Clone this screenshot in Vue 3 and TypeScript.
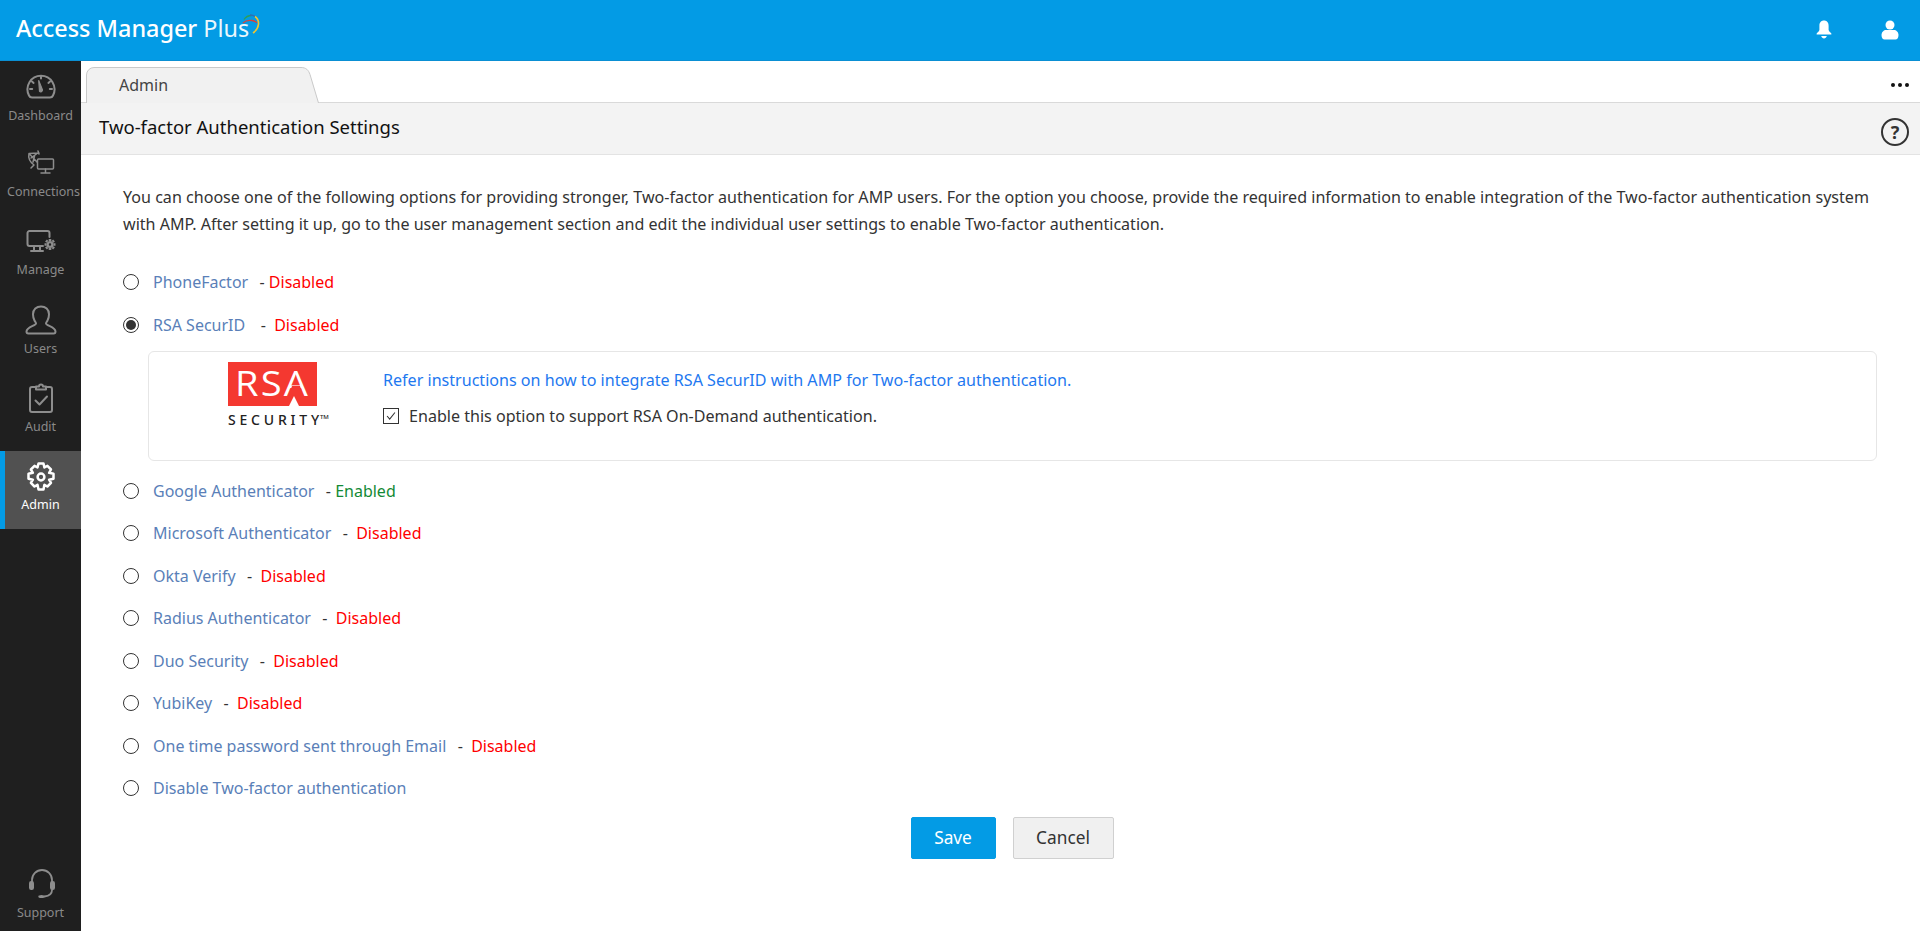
<script setup lang="ts">
interface NavItem { label: string; icon: string; active?: boolean }
interface Opt { name: string; sep: string; status: string; enabled?: boolean; checked?: boolean; panel?: boolean }

const nav: NavItem[] = [
  { label: 'Dashboard', icon: 'dash' },
  { label: 'Connections', icon: 'conn' },
  { label: 'Manage', icon: 'manage' },
  { label: 'Users', icon: 'users' },
  { label: 'Audit', icon: 'audit' },
  { label: 'Admin', icon: 'admin', active: true },
]

const options: Opt[] = [
  { name: 'PhoneFactor', sep: '  - ', status: 'Disabled' },
  { name: 'RSA SecurID', sep: '   -  ', status: 'Disabled', checked: true, panel: true },
  { name: 'Google Authenticator', sep: '  - ', status: 'Enabled', enabled: true },
  { name: 'Microsoft Authenticator', sep: '  -  ', status: 'Disabled' },
  { name: 'Okta Verify', sep: '  -  ', status: 'Disabled' },
  { name: 'Radius Authenticator', sep: '  -  ', status: 'Disabled' },
  { name: 'Duo Security', sep: '  -  ', status: 'Disabled' },
  { name: 'YubiKey', sep: '  -  ', status: 'Disabled' },
  { name: 'One time password sent through Email', sep: '  -  ', status: 'Disabled' },
  { name: 'Disable Two-factor authentication', sep: '', status: '' },
]
</script>

<template>
  <div class="app">
    <header class="topbar">
      <div class="brand">
        <span class="brand-strong">Access Manager</span>&nbsp;<span class="brand-light">Plus</span>
        <svg class="swoosh" width="20" height="20" viewBox="0 0 20 20" fill="none" stroke-width="1.300">
          <path d="M1 9 C3 7 6 6 10 6.500 C12 6.800 14 7.500 15 9" stroke="#d8433a" />
          <path d="M2 5.500 C4 2.500 7 1.500 9.500 1.500" stroke="#2f9e57" />
          <path d="M8 1 C11 1 15 3 17 7" stroke="#2d6fb8" />
          <path d="M13 2.500 C18 6 18 14 11 19" stroke="#f0c42f" stroke-width="1.600" />
        </svg>
      </div>
      <div class="top-actions">
        <svg width="16" height="20" viewBox="0 0 16 20" fill="#fff">
          <path d="M8 0.500c3 0 4.600 2.200 4.600 5.200v4.100c0 1.300 1.800 2.500 2.700 3.600.4.500.1 1.100-.5 1.100H1.200c-.6 0-.9-.6-.5-1.100.9-1.100 2.700-2.300 2.700-3.600V5.700C3.400 2.700 5 .5 8 .5z" />
          <path d="M5.200 16h5.600c-.4 1.500-1.500 2.500-2.800 2.500S5.600 17.500 5.200 16z" />
        </svg>
        <svg width="18" height="20" viewBox="0 0 18 20" fill="#fff">
          <circle cx="9" cy="5" r="4.500" />
          <path d="M.5 15c0-3 2.500-5 4.500-5h8c2 0 4.500 2 4.500 5 0 3-1.500 4.500-3 4.500H3.500C2 19.500.5 18 .5 15z" />
        </svg>
      </div>
    </header>

    <div class="body">
      <aside class="sidebar">
        <nav class="nav-top">
          <a v-for="item in nav" :key="item.label" class="nav-item" :class="['nav-' + item.icon, { active: item.active }]">
            <svg class="nav-icon" viewBox="0 0 32 32" width="32" height="32" fill="none" stroke="currentColor" stroke-width="2" stroke-linecap="round" stroke-linejoin="round">
              <template v-if="item.icon === 'dash'">
                <path d="M7 27.500 h18 c1.500 0 2.500-.8 3-2 a13.500 13.500 0 1 0-24 0 c.5 1.200 1.500 2 3 2z" />
                <path d="M13.700 10.500 l3.800 9.500 a1.800 1.800 0 0 1-3 1.300z" fill="currentColor" stroke-width="1.200" />
                <path d="M16 6.500v2M7 11.500l1.600 1.400M25 11.500l-1.600 1.400M5 19h2.200M27 19h-2.200" />
              </template>
              <template v-else-if="item.icon === 'conn'">
                <g stroke-width="1.500">
                  <path d="M4 5.500 L12 14 M4 5.500 C3 10 5 14 9 17 M4 5.500 L14 5 M6 10 L12 5.500 M8 14 L9.500 8 M9 17 L6 20 M13 3 L14 6" />
                  <rect x="12.500" y="11" width="16" height="10" rx="1" fill="#1f1f1f" />
                  <path d="M20.500 21v3.500M16 25h9" />
                </g>
              </template>
              <template v-else-if="item.icon === 'manage'">
                <path d="M18 20H4.500A2 2 0 0 1 2.500 18V7a2 2 0 0 1 2-2h18a2 2 0 0 1 2 2v4" />
                <path d="M9 20v4.500M15 20v4.500M6 25h12" />
                <circle cx="25" cy="18.500" r="2.400" stroke-width="2.400" />
                <path d="M25 13v2M25 22v2M19.500 18.500h2M28.500 18.500h2M21 14.500l1.400 1.400M27.600 21.100l1.400 1.400M21 22.500l1.400-1.400M27.600 15.900l1.400-1.400" stroke-width="2.600" stroke-linecap="butt" />
              </template>
              <template v-else-if="item.icon === 'users'">
                <g transform="translate(0 1)">
                  <path d="M11 18.500c0-1-.8-1.600-1.500-3-1-1.800-1.500-4-1.500-6.200C8 4.500 11.500 1.500 16 1.500s8 3 8 7.800c0 2.200-.5 4.400-1.500 6.200-.7 1.400-1.500 2-1.500 3 0 2 9.500 3.500 9.500 8 0 1.200-.5 2-1.800 2H3.300c-1.300 0-1.800-.8-1.800-2 0-4.500 9.500-6 9.500-8z" />
                </g>
              </template>
              <template v-else-if="item.icon === 'audit'">
                <path d="M11 5H7a2 2 0 0 0-2 2v21a2 2 0 0 0 2 2h18a2 2 0 0 0 2-2V7a2 2 0 0 0-2-2h-4" />
                <path d="M11 7.500V4.500h3a2 2 0 0 1 4 0h3v3z" />
                <path d="M10.500 18.500l4 4 7.500-8" />
              </template>
              <template v-else>
                <g transform="translate(0 1)">
                  <path stroke-width="2.500" d="M13.500 2.500h5l.9 4 3-1.600 3.600 3.600-1.900 3.300 4.400.9v5l-4.400 1 1.900 3.200-3.600 3.600-3-1.700-.9 4.700h-5l-1-4.700-3 1.700-3.600-3.600 2-3.200-4.400-1v-5l4.400-.9-2-3.300 3.600-3.600 3 1.600z" />
                  <circle cx="16" cy="16" r="3.400" stroke-width="2.500" />
                </g>
              </template>
            </svg>
            <span class="nav-label">{{ item.label }}</span>
          </a>
        </nav>
        <a class="nav-item support">
          <svg class="nav-icon" viewBox="0 0 32 32" width="32" height="32" fill="none" stroke="currentColor" stroke-width="1.800" stroke-linecap="round">
            <path d="M7 17V12a10 10 0 0 1 20 0v5" />
            <rect x="4" y="13" width="5" height="9" rx="2.200" fill="currentColor" stroke="none" />
            <rect x="25" y="13" width="5" height="9" rx="2.200" fill="currentColor" stroke="none" />
            <path d="M27 22c0 4-3 6-7.500 6.500" />
            <ellipse cx="16.500" cy="28.500" rx="3.200" ry="1.500" fill="currentColor" stroke="none" />
          </svg>
          <span class="nav-label">Support</span>
        </a>
      </aside>

      <main class="main">
        <div class="tabbar">
          <div class="tab-wrap">
            <svg class="tab-shape" width="233" height="36" viewBox="0 0 233 36">
              <path d="M.5 36V8a7.500 7.500 0 0 1 7.500-7.500H215c5 0 7.500 2.500 9 7L232.500 36" fill="#f1f1f1" stroke="#c9c9c9" />
            </svg>
            <span class="tab-label">Admin</span>
          </div>
          <div class="dots"><i></i><i></i><i></i></div>
        </div>

        <div class="titlebar">
          <h1>Two-factor Authentication Settings</h1>
          <span class="help">?</span>
        </div>

        <section class="content">
          <p class="intro">You can choose one of the following options for providing stronger, Two-factor authentication for AMP users. For the option you choose, provide the required information to enable integration of the Two-factor authentication system with AMP. After setting it up, go to the user management section and edit the individual user settings to enable Two-factor authentication.</p>

          <div class="options">
            <template v-for="o in options" :key="o.name">
              <div class="opt">
                <span class="radio" :class="{ on: o.checked }"></span>
                <span class="opt-name">{{ o.name }}</span>
                <span v-if="o.status" class="opt-sep">{{ o.sep }}</span>
                <span v-if="o.status" :class="o.enabled ? 'enabled' : 'disabled'">{{ o.status }}</span>
              </div>
              <div v-if="o.panel" class="panel">
                <div class="logo-col">
                  <div class="rsa-mark">
                    <span class="rsa-text">RSA</span>
                    <span class="rsa-bar"></span>
                    <span class="rsa-notch"></span>
                  </div>
                  <div class="rsa-sec">SECURITY<sup>TM</sup></div>
                </div>
                <div class="panel-text">
                  <a class="refer">Refer instructions on how to integrate RSA SecurID with AMP for Two-factor authentication.</a>
                  <label class="check-row">
                    <span class="check">
                      <svg width="16" height="16" viewBox="0 0 16 16" fill="none" stroke="#333" stroke-width="1.200"><path d="M3.500 8l3 3.500 6-7.500" /></svg>
                    </span>
                    Enable this option to support RSA On-Demand authentication.
                  </label>
                </div>
              </div>
            </template>
          </div>

          <div class="actions">
            <button class="btn primary" type="button">Save</button>
            <button class="btn" type="button">Cancel</button>
          </div>
        </section>
      </main>
    </div>
  </div>
</template>

<style>
html, body { margin: 0; padding: 0; background: #fff; }
</style>

<style scoped>
.app {
  width: 1920px;
  height: 931px;
  display: flex;
  flex-direction: column;
  overflow: hidden;
  font-family: "Noto Sans", "Open Sans", sans-serif;
  font-size: 14px;
  color: #333;
}
.topbar {
  height: 61px;
  flex: none;
  box-sizing: border-box;
  background: #039be5;
  border-bottom: 1px solid #0a8fd3;
  display: flex;
  align-items: center;
  justify-content: space-between;
  padding: 0 21px 0 16px;
}
.brand {
  position: relative;
  color: #fff;
  font-size: 23.400px;
  line-height: 1;
  padding-bottom: 2px;
  display: flex;
}
.brand-strong { font-weight: 500; }
.brand-light { font-weight: 400; opacity: .92; }
.swoosh { position: absolute; right: -13px; top: -3px; }
.top-actions { display: flex; align-items: center; gap: 49px; }
.body { flex: 1; display: flex; min-height: 0; }
.sidebar {
  width: 81px;
  flex: none;
  background: #1f1f1f;
  display: flex;
  flex-direction: column;
  justify-content: space-between;
}
.nav-top { display: flex; flex-direction: column; }
.nav-item {
  height: 78px;
  box-sizing: border-box;
  display: flex;
  flex-direction: column;
  align-items: center;
  justify-content: flex-start;
  padding-top: 9px;
  color: #8d8d8d;
}
.nav-item.support { padding-top: 15px; }
.nav-icon { flex: none; }
.nav-label { font-size: 12.500px; line-height: 18px; margin-top: 4px; color: #8a8a8a; white-space: nowrap; }
.nav-dash .nav-label { margin-top: 5px; }
.nav-conn .nav-label { margin: 3px 0 0 6px; }
.nav-manage .nav-label { margin-top: 3px; }
.nav-item.active { background: #515151; color: #fff; border-left: 5px solid #039be5; padding-right: 5px; }
.nav-item.active .nav-label { color: #fff; }
.main { flex: 1; min-width: 0; display: flex; flex-direction: column; }
.tabbar {
  height: 41px;
  flex: none;
  box-sizing: border-box;
  padding: 6px 0 0 5px;
  display: flex;
  justify-content: space-between;
  align-items: flex-end;
}
.tab-wrap { position: relative; width: 233px; height: 35px; }
.tab-shape { display: block; }
.tab-label { position: absolute; left: 33px; top: 8px; font-size: 16px; line-height: 20px; color: #444; }
.dots { display: flex; gap: 3px; padding: 0 11px 15px 0; }
.dots i { width: 4px; height: 4px; border-radius: 50%; background: #111; }
.titlebar {
  height: 53px;
  flex: none;
  box-sizing: border-box;
  background: #f3f3f3;
  border-top: 1px solid #d9d9d9;
  border-bottom: 1px solid #e3e3e3;
  display: flex;
  align-items: center;
  justify-content: space-between;
  padding: 0 11px 0 18px;
}
.titlebar h1 { margin: 0; font-size: 18.500px; font-weight: 400; color: #111; position: relative; top: -2px; }
.help {
  width: 24px;
  height: 24px;
  border: 2px solid #333;
  border-radius: 50%;
  display: flex;
  align-items: center;
  justify-content: center;
  font-size: 18px;
  font-weight: 700;
  color: #333;
  line-height: 1;
  position: relative;
  top: 3px;
}
.content { padding: 29px 44px 0 42px; }
.intro { margin: 0 0 23px; font-size: 16.080px; line-height: 27px; color: #333; }
.options { display: flex; flex-direction: column; }
.opt { height: 42.500px; display: flex; align-items: center; font-size: 16px; white-space: pre; }
.radio {
  width: 16px;
  height: 16px;
  box-sizing: border-box;
  border: 1px solid #333;
  border-radius: 50%;
  margin-right: 14px;
  position: relative;
  background: #fff;
}
.radio.on::after {
  content: "";
  position: absolute;
  inset: 2px;
  border-radius: 50%;
  background: #333;
}
.opt-name { color: #5a7fb8; margin-right: 3px; }
.opt-sep { color: #333; }
.disabled { color: #ff0000; }
.enabled { color: #138a36; }
.panel {
  box-sizing: border-box;
  height: 110px;
  margin: 5px 0 8.500px 25px;
  width: 1729px;
  border: 1px solid #e6e6e6;
  border-radius: 6px;
  display: flex;
  flex: none;
}
.logo-col { width: 234px; padding: 10px 0 0 79px; box-sizing: border-box; flex: none; }
.rsa-mark {
  position: relative;
  width: 89px;
  height: 44px;
  background: #f43830;
  color: #fff;
  padding-left: 7px;
  box-sizing: border-box;
}
.rsa-text {
  display: inline-block;
  font-size: 34px;
  font-weight: 500;
  line-height: 42px;
  letter-spacing: 2px;
  font-family: "Open Sans", sans-serif;
  white-space: nowrap;
  transform: scaleX(1.12);
  transform-origin: 0 50%;
}
.rsa-bar {
  position: absolute;
  left: 62.400px;
  top: 23.500px;
  width: 11.200px;
  height: 5px;
  background: #f43830;
  clip-path: polygon(1.800px 0, 9.400px 0, 11.200px 100%, 0 100%);
}
.rsa-notch {
  position: absolute;
  left: 61px;
  bottom: 0;
  width: 0;
  height: 0;
  border-left: 5px solid transparent;
  border-right: 5px solid transparent;
  border-bottom: 10px solid #fff;
}
.rsa-sec { font-size: 14px; font-weight: 500; letter-spacing: 3.800px; color: #222; margin-top: 5px; white-space: nowrap; line-height: 18px; width: 110px; }
.rsa-sec sup { font-size: 6px; letter-spacing: 0; vertical-align: 6px; line-height: 0; margin-left: -3px; }
.panel-text { padding-top: 18px; font-size: 16.080px; }
.refer { color: #1e78f0; display: block; line-height: 20px; }
.check-row { display: flex; align-items: center; margin-top: 16px; line-height: 20px; color: #333; }
.check {
  width: 16px;
  height: 16px;
  box-sizing: border-box;
  border: 1px solid #333;
  margin-right: 10px;
  display: flex;
  align-items: center;
  justify-content: center;
}
.actions { display: flex; justify-content: center; gap: 17px; margin-top: 7px; padding-left: 25px; }
.btn {
  height: 42px;
  width: 101px;
  box-sizing: border-box;
  border: 1px solid #d0d0d0;
  background: #f0f0f0;
  border-radius: 2px;
  font-family: inherit;
  font-size: 17.300px;
  color: #333;
  padding: 0;
}
.btn.primary { width: 85px; background: #039be5; border-color: #039be5; color: #fff; }
</style>
